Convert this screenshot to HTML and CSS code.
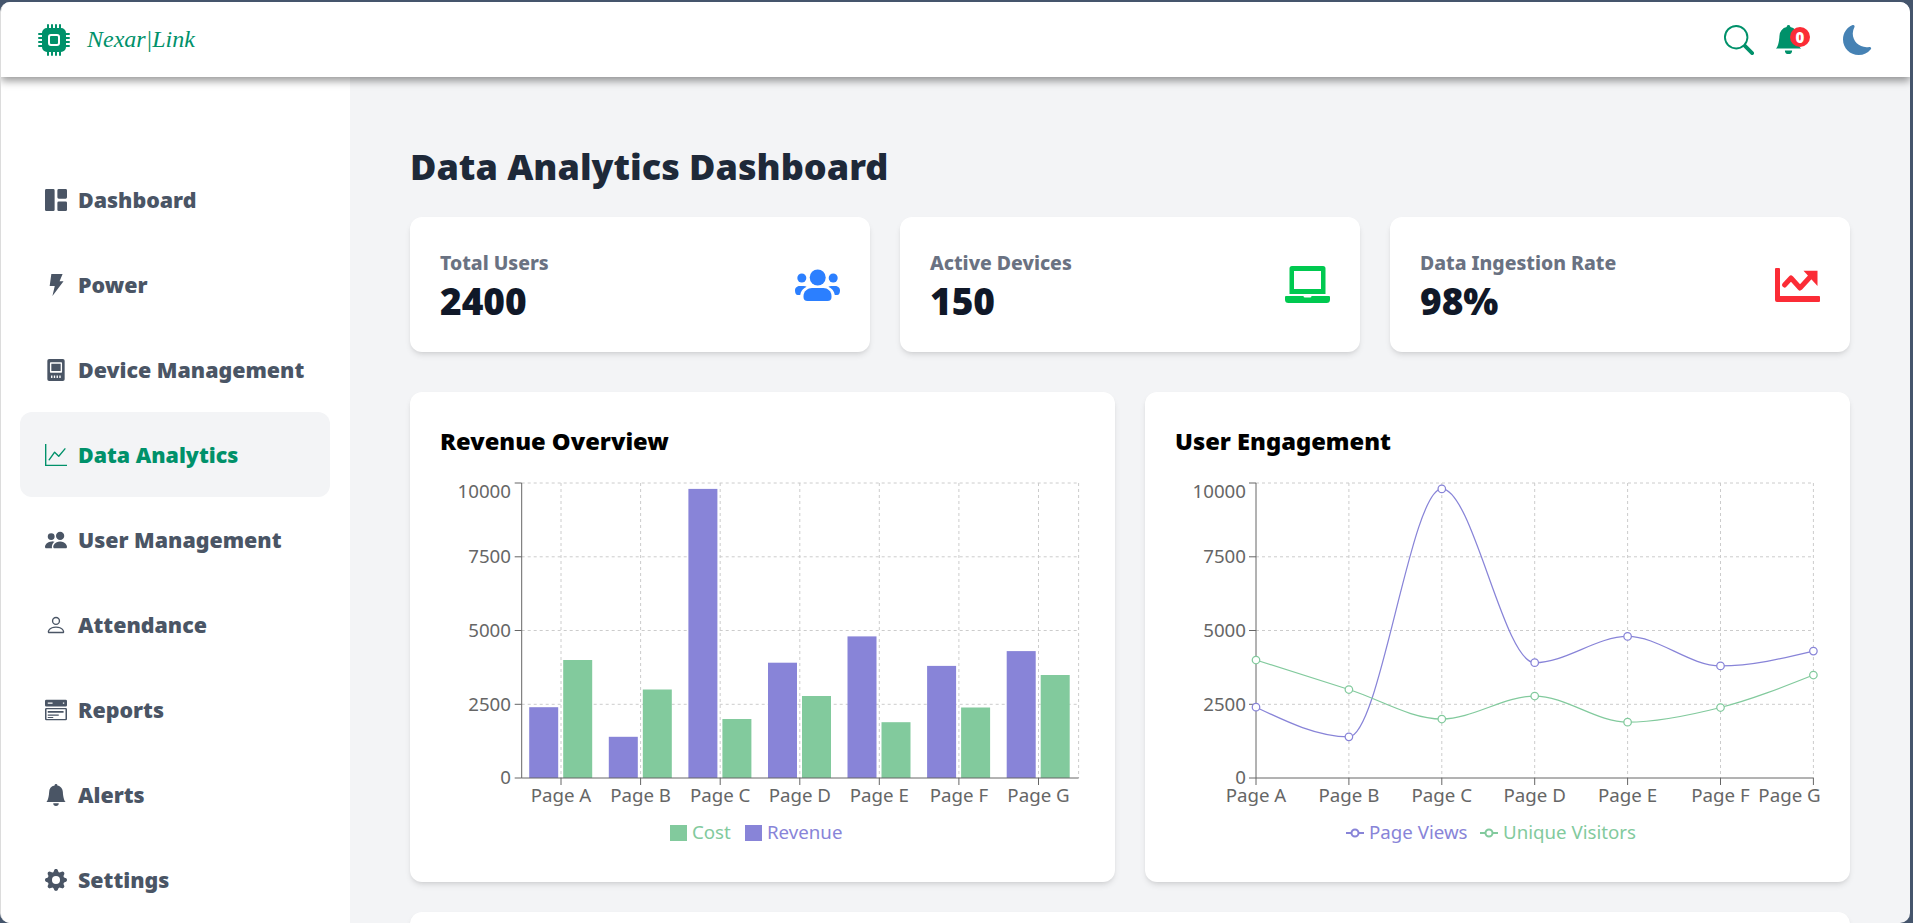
FILE: index.html
```html
<!DOCTYPE html>
<html lang="en">
<head>
    <meta charset="UTF-8">
    <meta name="viewport" content="width=device-width, initial-scale=1.0">
    <title>Nexar|Link - Data Analytics</title>
    <link rel="stylesheet" href="styles.css">
</head>
<body>
    <div class="window">
        <header class="topbar">
            <div class="brand">
                <svg class="brand-icon" viewBox="0 0 16 16" fill="currentColor">
                    <path d="M6.5 6a.5.5 0 0 0-.5.5v3a.5.5 0 0 0 .5.5h3a.5.5 0 0 0 .5-.5v-3a.5.5 0 0 0-.5-.5h-3z"/>
                    <path d="M5.5.5a.5.5 0 0 0-1 0V2A2.5 2.5 0 0 0 2 4.5H.5a.5.5 0 0 0 0 1H2v1H.5a.5.5 0 0 0 0 1H2v1H.5a.5.5 0 0 0 0 1H2v1H.5a.5.5 0 0 0 0 1H2A2.5 2.5 0 0 0 4.5 14v1.5a.5.5 0 0 0 1 0V14h1v1.5a.5.5 0 0 0 1 0V14h1v1.5a.5.5 0 0 0 1 0V14h1v1.5a.5.5 0 0 0 1 0V14a2.5 2.5 0 0 0 2.5-2.5h1.5a.5.5 0 0 0 0-1H14v-1h1.5a.5.5 0 0 0 0-1H14v-1h1.5a.5.5 0 0 0 0-1H14v-1h1.5a.5.5 0 0 0 0-1H14A2.5 2.5 0 0 0 11.5 2V.5a.5.5 0 0 0-1 0V2h-1V.5a.5.5 0 0 0-1 0V2h-1V.5a.5.5 0 0 0-1 0V2h-1V.5zm1 4.5h3A1.5 1.5 0 0 1 11 6.5v3A1.5 1.5 0 0 1 9.5 11h-3A1.5 1.5 0 0 1 5 9.5v-3A1.5 1.5 0 0 1 6.5 5z"/>
                </svg>
                <span class="brand-name">Nexar|Link</span>
            </div>
            <div class="topbar-actions">
                <svg class="action-search" viewBox="0 0 16 16" fill="currentColor">
                    <path d="M11.742 10.344a6.5 6.5 0 1 0-1.397 1.398h-.001c.03.04.062.078.098.115l3.85 3.85a1 1 0 0 0 1.415-1.414l-3.85-3.85a1.007 1.007 0 0 0-.115-.1zM12 6.5a5.5 5.5 0 1 1-11 0 5.5 5.5 0 0 1 11 0z"/>
                </svg>
                <div class="action-bell">
                    <svg viewBox="0 0 16 16" fill="currentColor">
                        <path d="M8 16a2 2 0 0 0 2-2H6a2 2 0 0 0 2 2zm.995-14.901a1 1 0 1 0-1.99 0A5.002 5.002 0 0 0 3 6c0 1.098-.5 6-2 7h14c-1.5-1-2-5.902-2-7 0-2.42-1.72-4.44-4.005-4.901z"/>
                    </svg>
                    <span class="badge">0</span>
                </div>
                <svg class="action-moon" viewBox="0 0 16 16" fill="currentColor">
                    <path d="M6 .278a.768.768 0 0 1 .08.858 7.208 7.208 0 0 0-.878 3.46c0 4.021 3.278 7.277 7.318 7.277.527 0 1.04-.055 1.533-.16a.787.787 0 0 1 .81.316.733.733 0 0 1-.031.893A8.349 8.349 0 0 1 8.344 16C3.734 16 0 12.286 0 7.71 0 4.266 2.114 1.312 5.124.06A.752.752 0 0 1 6 .278z"/>
                </svg>
            </div>
        </header>

        <div class="layout">
            <nav class="sidebar">
                <a class="nav-item">
                    <svg viewBox="0 0 16 16" fill="currentColor"><path d="M0 1a1 1 0 0 1 1-1h5a1 1 0 0 1 1 1v14a1 1 0 0 1-1 1H1a1 1 0 0 1-1-1V1zm9 0a1 1 0 0 1 1-1h5a1 1 0 0 1 1 1v5a1 1 0 0 1-1 1h-5a1 1 0 0 1-1-1V1zm0 9a1 1 0 0 1 1-1h5a1 1 0 0 1 1 1v5a1 1 0 0 1-1 1h-5a1 1 0 0 1-1-1v-5z"/></svg>
                    Dashboard
                </a>
                <a class="nav-item">
                    <svg viewBox="0 0 16 16" fill="currentColor"><path d="M4.6 0h8.2L10.6 5.2h2.9L5.4 16l1.7-7.2H3.4z"/></svg>
                    Power
                </a>
                <a class="nav-item">
                    <svg viewBox="0 0 16 16" fill="currentColor">
                        <path fill-rule="evenodd" d="M3 0h10a1.3 1.3 0 0 1 1.3 1.3v13.4A1.3 1.3 0 0 1 13 16H3a1.3 1.3 0 0 1-1.3-1.3V1.3A1.3 1.3 0 0 1 3 0zm1.2 2.4a.6.6 0 0 0-.6.6v6.4a.6.6 0 0 0 .6.6h7.6a.6.6 0 0 0 .6-.6V3a.6.6 0 0 0-.6-.6zm.4 1h6.8v5.4H4.6zM4.4 12v1.8h1V12zm2 0v1.8h1V12zm2 0v1.8h1V12zm2 0v1.8h1V12z"/>
                    </svg>
                    Device Management
                </a>
                <a class="nav-item active">
                    <svg viewBox="0 0 16 16" fill="currentColor"><path d="M0 0h1v15h15v1H0V0Zm14.817 3.113a.5.5 0 0 1 .07.704l-4.5 5.5a.5.5 0 0 1-.74.037L7.06 6.767l-3.656 5.027a.5.5 0 0 1-.808-.588l4-5.5a.5.5 0 0 1 .758-.06l2.609 2.61 4.15-5.073a.5.5 0 0 1 .704-.07Z"/></svg>
                    Data Analytics
                </a>
                <a class="nav-item">
                    <svg viewBox="0 0 16 16" fill="currentColor"><path d="M7 14s-1 0-1-1 1-4 5-4 5 3 5 4-1 1-1 1H7Zm4-6a3 3 0 1 0 0-6 3 3 0 0 0 0 6Zm-5.784 6A2.238 2.238 0 0 1 5 13c0-1.355.68-2.75 1.936-3.72A6.325 6.325 0 0 0 5 9c-4 0-5 3-5 4s1 1 1 1h4.216ZM4.5 8a2.5 2.5 0 1 0 0-5 2.5 2.5 0 0 0 0 5Z"/></svg>
                    User Management
                </a>
                <a class="nav-item">
                    <svg viewBox="0 0 16 16" fill="currentColor"><path d="M8 8a3 3 0 1 0 0-6 3 3 0 0 0 0 6Zm2-3a2 2 0 1 1-4 0 2 2 0 0 1 4 0Zm4 8c0 1-1 1-1 1H3s-1 0-1-1 1-4 6-4 6 3 6 4Zm-1-.004c-.001-.246-.154-.986-.832-1.664C11.516 10.68 10.289 10 8 10c-2.29 0-3.516.68-4.168 1.332-.678.678-.83 1.418-.832 1.664h10Z"/></svg>
                    Attendance
                </a>
                <a class="nav-item">
                    <svg viewBox="0 0 16 16" fill="currentColor">
                        <path fill-rule="evenodd" d="M1 .5h14a1 1 0 0 1 1 1v3a1 1 0 0 1-1 1H1a1 1 0 0 1-1-1v-3a1 1 0 0 1 1-1zm1 2v1h3.5v-1zm11 0v1h1v-1z"/>
                        <path fill-rule="evenodd" d="M1 6.5h14a1 1 0 0 1 1 1v7a1 1 0 0 1-1 1H1a1 1 0 0 1-1-1v-7a1 1 0 0 1 1-1zm.1 1v7h13.8v-7zM2 8.7h11.5V10H2zm0 2.5h8v.9H2zm0 1.8h4v.8H2z"/>
                    </svg>
                    Reports
                </a>
                <a class="nav-item">
                    <svg viewBox="0 0 16 16" fill="currentColor"><path d="M8 16a2 2 0 0 0 2-2H6a2 2 0 0 0 2 2zm.995-14.901a1 1 0 1 0-1.99 0A5.002 5.002 0 0 0 3 6c0 1.098-.5 6-2 7h14c-1.5-1-2-5.902-2-7 0-2.42-1.72-4.44-4.005-4.901z"/></svg>
                    Alerts
                </a>
                <a class="nav-item">
                    <svg viewBox="0 0 16 16" fill="currentColor"><path d="M9.405 1.05c-.413-1.4-2.397-1.4-2.81 0l-.1.34a1.464 1.464 0 0 1-2.105.872l-.31-.17c-1.283-.698-2.686.705-1.987 1.987l.169.311c.446.82.023 1.841-.872 2.105l-.34.1c-1.4.413-1.4 2.397 0 2.81l.34.1a1.464 1.464 0 0 1 .872 2.105l-.17.31c-.698 1.283.705 2.686 1.987 1.987l.311-.169a1.464 1.464 0 0 1 2.105.872l.1.34c.413 1.4 2.397 1.4 2.81 0l.1-.34a1.464 1.464 0 0 1 2.105-.872l.31.17c1.283.698 2.686-.705 1.987-1.987l-.169-.311a1.464 1.464 0 0 1 .872-2.105l.34-.1c1.4-.413 1.4-2.397 0-2.81l-.34-.1a1.464 1.464 0 0 1-.872-2.105l.17-.31c.698-1.283-.705-2.686-1.987-1.987l-.311.169a1.464 1.464 0 0 1-2.105-.872l-.1-.34zM8 10.93a2.929 2.929 0 1 1 0-5.86 2.929 2.929 0 0 1 0 5.858z"/></svg>
                    Settings
                </a>
            </nav>

            <main class="content">
                <h1 class="page-title">Data Analytics Dashboard</h1>

                <section class="stats">
                    <div class="card stat-card">
                        <div>
                            <div class="stat-label">Total Users</div>
                            <div class="stat-value">2400</div>
                        </div>
                        <svg class="stat-icon icon-blue" viewBox="0 0 45 32" fill="currentColor">
                            <circle cx="22.7" cy="8.5" r="8"/>
                            <circle cx="6.8" cy="9" r="4.5"/>
                            <circle cx="38.2" cy="9" r="4.5"/>
                            <path d="M8.5 27C8.5 22 13 19 17 19h11.4c4 0 8.1 3 8.1 8v1a4 4 0 0 1-4 4h-20a4 4 0 0 1-4-4z"/>
                            <path d="M0 21.5c0-2.8 2.3-4.5 4.8-4.5h4c1 0 2 .2 2.8.7-3.6 1.7-5.8 4.3-6.4 8.3H2.8C1 26 0 24 0 21.5z"/>
                            <path d="M45 21.5c0-2.8-2.3-4.5-4.8-4.5h-4c-1 0-2 .2-2.8.7 3.6 1.7 5.8 4.3 6.4 8.3h2.4c1.8 0 2.8-2 2.8-4.5z"/>
                        </svg>
                    </div>
                    <div class="card stat-card">
                        <div>
                            <div class="stat-label">Active Devices</div>
                            <div class="stat-value">150</div>
                        </div>
                        <svg class="stat-icon icon-green" viewBox="0 0 45 37" fill="currentColor">
                            <path fill-rule="evenodd" d="M7 0h31a2.5 2.5 0 0 1 2.5 2.5V28h-36V2.5A2.5 2.5 0 0 1 7 0zm2 5v18h27V5z"/>
                            <path d="M1 30h17.5a1.5 1.5 0 0 0 1.5 1.5h5a1.5 1.5 0 0 0 1.5-1.5H44a1 1 0 0 1 1 1v2.5a3.5 3.5 0 0 1-3.5 3.5h-38A3.5 3.5 0 0 1 0 33.5V31a1 1 0 0 1 1-1z"/>
                        </svg>
                    </div>
                    <div class="card stat-card">
                        <div>
                            <div class="stat-label">Data Ingestion Rate</div>
                            <div class="stat-value">98%</div>
                        </div>
                        <svg class="stat-icon icon-red" viewBox="0 0 45 34" fill="currentColor">
                            <path d="M1 0h3a1 1 0 0 1 1 1v27h39a1 1 0 0 1 1 1v4a1 1 0 0 1-1 1H2a2 2 0 0 1-2-2V1a1 1 0 0 1 1-1z"/>
                            <path d="M28.5 2.7h14V18z"/>
                            <polyline class="trend-line" points="9.5,17 16,10 25,20 36,8"/>
                        </svg>
                    </div>
                </section>

                <section class="charts">
                    <div class="card chart-card">
                        <h2 class="chart-title">Revenue Overview</h2>
                        <svg class="chart" viewBox="440 478 645 374">
                            <g class="grid">
                                <path d="M521.7 483H1078.6M521.7 556.8H1078.6M521.7 630.5H1078.6M521.7 704.3H1078.6"/>
                                <path d="M561 483V778M640.6 483V778M720.2 483V778M799.8 483V778M879.3 483V778M958.9 483V778M1038.5 483V778M1078.6 483V778"/>
                            </g>
                            <g class="bars-revenue">
                                <rect x="529.2" y="707.2" width="29" height="70.8"/>
                                <rect x="608.8" y="736.8" width="29" height="41.2"/>
                                <rect x="688.4" y="488.9" width="29" height="289.1"/>
                                <rect x="768" y="662.7" width="29" height="115.3"/>
                                <rect x="847.5" y="636.4" width="29" height="141.6"/>
                                <rect x="927.1" y="665.9" width="29" height="112.1"/>
                                <rect x="1006.7" y="651.1" width="29" height="126.9"/>
                            </g>
                            <g class="bars-cost">
                                <rect x="563.2" y="660" width="29" height="118"/>
                                <rect x="642.8" y="689.5" width="29" height="88.5"/>
                                <rect x="722.4" y="719" width="29" height="59"/>
                                <rect x="802" y="696" width="29" height="82"/>
                                <rect x="881.5" y="722.2" width="29" height="55.8"/>
                                <rect x="961.1" y="707.5" width="29" height="70.5"/>
                                <rect x="1040.7" y="675" width="29" height="103"/>
                            </g>
                            <g class="axis">
                                <path d="M521.7 483V778H1078.6"/>
                                <path d="M514.7 483h7M514.7 556.8h7M514.7 630.5h7M514.7 704.3h7M514.7 778h7"/>
                                <path d="M561 778v7M640.6 778v7M720.2 778v7M799.8 778v7M879.3 778v7M958.9 778v7M1038.5 778v7"/>
                            </g>
                            <g class="tick-y">
                                <text x="511" y="498">10000</text>
                                <text x="511" y="563">7500</text>
                                <text x="511" y="637">5000</text>
                                <text x="511" y="711">2500</text>
                                <text x="511" y="784">0</text>
                            </g>
                            <g class="tick-x">
                                <text x="561" y="802">Page A</text>
                                <text x="640.6" y="802">Page B</text>
                                <text x="720.2" y="802">Page C</text>
                                <text x="799.8" y="802">Page D</text>
                                <text x="879.3" y="802">Page E</text>
                                <text x="958.9" y="802">Page F</text>
                                <text x="1038.5" y="802">Page G</text>
                            </g>
                            <rect class="swatch-cost" x="670" y="825" width="17" height="16"/>
                            <text class="legend-cost" x="692" y="839">Cost</text>
                            <rect class="swatch-revenue" x="745" y="825" width="17" height="16"/>
                            <text class="legend-revenue" x="767" y="839">Revenue</text>
                        </svg>
                    </div>

                    <div class="card chart-card">
                        <h2 class="chart-title">User Engagement</h2>
                        <svg class="chart" viewBox="1175 478 645 374">
                            <g class="grid">
                                <path d="M1256 483H1813.4M1256 556.8H1813.4M1256 630.5H1813.4M1256 704.3H1813.4"/>
                                <path d="M1348.9 483V778M1441.8 483V778M1534.7 483V778M1627.6 483V778M1720.5 483V778M1813.4 483V778"/>
                            </g>
                            <g class="axis">
                                <path d="M1256 483V778H1813.4"/>
                                <path d="M1249 483h7M1249 556.8h7M1249 630.5h7M1249 704.3h7M1249 778h7"/>
                                <path d="M1256 778v7M1348.9 778v7M1441.8 778v7M1534.7 778v7M1627.6 778v7M1720.5 778v7M1813.4 778v7"/>
                            </g>
                            <g class="tick-y">
                                <text x="1246" y="498">10000</text>
                                <text x="1246" y="563">7500</text>
                                <text x="1246" y="637">5000</text>
                                <text x="1246" y="711">2500</text>
                                <text x="1246" y="784">0</text>
                            </g>
                            <g class="tick-x">
                                <text x="1256" y="802">Page A</text>
                                <text x="1348.9" y="802">Page B</text>
                                <text x="1441.8" y="802">Page C</text>
                                <text x="1534.7" y="802">Page D</text>
                                <text x="1627.6" y="802">Page E</text>
                                <text x="1720.5" y="802">Page F</text>
                                <text x="1789.5" y="802">Page G</text>
                            </g>
                            <path class="line-views" d="M1256 707.2C1286.97 722 1317.93 736.8 1348.9 736.8C1379.87 736.8 1410.83 488.9 1441.8 488.9C1472.77 488.9 1503.73 662.7 1534.7 662.7C1565.67 662.7 1596.63 636.4 1627.6 636.4C1658.57 636.4 1689.53 665.9 1720.5 665.9C1751.47 665.9 1782.43 658.5 1813.4 651.1"/>
                            <path class="line-visitors" d="M1256 660L1348.9 689.5C1379.87 699.33 1410.83 719 1441.8 719C1472.77 719 1503.73 696 1534.7 696C1565.67 696 1596.63 722.2 1627.6 722.2C1658.57 722.2 1689.53 715.37 1720.5 707.5C1751.47 699.63 1782.43 687.32 1813.4 675"/>
                            <g class="dots-views">
                                <circle cx="1256" cy="707.2" r="3.75"/>
                                <circle cx="1348.9" cy="736.8" r="3.75"/>
                                <circle cx="1441.8" cy="488.9" r="3.75"/>
                                <circle cx="1534.7" cy="662.7" r="3.75"/>
                                <circle cx="1627.6" cy="636.4" r="3.75"/>
                                <circle cx="1720.5" cy="665.9" r="3.75"/>
                                <circle cx="1813.4" cy="651.1" r="3.75"/>
                            </g>
                            <g class="dots-visitors">
                                <circle cx="1256" cy="660" r="3.75"/>
                                <circle cx="1348.9" cy="689.5" r="3.75"/>
                                <circle cx="1441.8" cy="719" r="3.75"/>
                                <circle cx="1534.7" cy="696" r="3.75"/>
                                <circle cx="1627.6" cy="722.2" r="3.75"/>
                                <circle cx="1720.5" cy="707.5" r="3.75"/>
                                <circle cx="1813.4" cy="675" r="3.75"/>
                            </g>
                            <g class="dots-views legend-key">
                                <path d="M1346 833h18"/>
                                <circle cx="1355" cy="833" r="3.5"/>
                            </g>
                            <text class="legend-revenue" x="1369" y="839">Page Views</text>
                            <g class="dots-visitors legend-key">
                                <path d="M1480 833h18"/>
                                <circle cx="1489" cy="833" r="3.5"/>
                            </g>
                            <text class="legend-cost" x="1503" y="839">Unique Visitors</text>
                        </svg>
                    </div>
                </section>

                <div class="card extra-card"></div>
            </main>
        </div>
    </div>
</body>
</html>
```

FILE: styles.css
```css
* {
    box-sizing: border-box;
}
html, body {
    height: 100%;
}
body {
    margin: 0;
    overflow: hidden;
    background: #45556c;
    font-family: "Noto Sans", "Open Sans", sans-serif;
}
.window {
    height: calc(100vh - 2px);
    margin: 2px 3px 0 0;
    border-left: 1px solid #dcdcdc;
    border-radius: 10px;
    overflow: hidden;
    background: #f3f4f6;
    display: flex;
    flex-direction: column;
}
.topbar {
    position: relative;
    z-index: 2;
    flex: none;
    height: 75px;
    padding: 0 37px;
    background: #fff;
    display: flex;
    justify-content: space-between;
    align-items: center;
    box-shadow: 0 4px 8px rgba(0, 0, 0, 0.4);
}
.brand {
    display: flex;
    align-items: center;
    gap: 17px;
    color: #00916a;
}
.brand-icon {
    width: 32px;
    height: 32px;
}
.brand-name {
    font-family: "Liberation Serif", serif;
    font-style: italic;
    font-size: 24px;
}
.topbar-actions {
    display: flex;
    align-items: center;
    gap: 20px;
    color: #00916a;
}
.action-search {
    width: 30px;
    height: 30px;
}
.action-bell {
    position: relative;
    width: 29px;
    height: 29px;
}
.action-bell svg {
    display: block;
    width: 29px;
    height: 29px;
}
.badge {
    position: absolute;
    top: 2px;
    right: -7px;
    width: 20px;
    height: 20px;
    border-radius: 50%;
    background: #fb2c36;
    color: #fff;
    font-size: 15px;
    font-weight: 900;
    line-height: 20px;
    text-align: center;
}
.action-moon {
    width: 30px;
    height: 30px;
    margin-left: 20px;
    color: #4682b4;
}
.layout {
    flex: 1;
    min-height: 0;
    display: flex;
}
.sidebar {
    flex: none;
    width: 349px;
    padding: 80px 20px 0 19px;
    background: #fff;
}
.nav-item {
    height: 85px;
    padding-left: 25px;
    border-radius: 12px;
    display: flex;
    align-items: center;
    gap: 11px;
    color: #4a5565;
    font-size: 21.4px;
    font-weight: 900;
}
.nav-item svg {
    flex: none;
    width: 22px;
    height: 22px;
}
.nav-item.active {
    background: #f3f4f6;
    color: #00916a;
}
.content {
    flex: 1;
    min-width: 0;
    padding: 70px 60px 0;
}
.page-title {
    margin: 0 0 30px;
    color: #1e2939;
    font-size: 36px;
    font-weight: 900;
    line-height: 40px;
}
.card {
    background: #fff;
    border-radius: 12px;
    box-shadow: 0 4px 6px -1px rgba(0, 0, 0, 0.1), 0 2px 4px -2px rgba(0, 0, 0, 0.1);
}
.stats {
    display: grid;
    grid-template-columns: repeat(3, 1fr);
    gap: 30px;
    margin-bottom: 40px;
}
.stat-card {
    height: 135px;
    padding: 0 30px;
    display: flex;
    justify-content: space-between;
    align-items: center;
}
.stat-label {
    color: #6a7282;
    font-size: 19.4px;
    font-weight: 800;
    line-height: 34px;
}
.stat-value {
    margin-top: -2px;
    color: #101828;
    font-size: 37px;
    font-weight: 900;
    line-height: 46px;
}
.stat-icon {
    width: 45px;
}
.icon-blue {
    color: #2b7fff;
}
.icon-green {
    color: #00c950;
}
.icon-red {
    color: #fb2c36;
}
.trend-line {
    fill: none;
    stroke: currentColor;
    stroke-width: 5;
    stroke-linecap: round;
    stroke-linejoin: round;
}
.charts {
    display: grid;
    grid-template-columns: repeat(2, 1fr);
    gap: 30px;
    margin-bottom: 30px;
}
.chart-card {
    height: 490px;
    padding: 29px 30px 30px;
}
.chart-title {
    margin: 0 0 17px;
    color: #000;
    font-size: 23.7px;
    font-weight: 900;
    line-height: 40px;
}
.chart {
    display: block;
    width: 645px;
    height: 374px;
    font-size: 18.7px;
}
.grid path {
    fill: none;
    stroke: #ccc;
    stroke-dasharray: 3 3;
}
.axis path {
    fill: none;
    stroke: #666;
}
.tick-y text {
    fill: #666;
    text-anchor: end;
}
.tick-x text {
    fill: #666;
    text-anchor: middle;
}
.bars-revenue rect,
.swatch-revenue {
    fill: #8884d8;
}
.bars-cost rect,
.swatch-cost {
    fill: #82ca9d;
}
.legend-revenue {
    fill: #8884d8;
}
.legend-cost {
    fill: #82ca9d;
}
.line-views,
.line-visitors {
    fill: none;
    stroke-width: 1.25;
}
.line-views {
    stroke: #8884d8;
}
.line-visitors {
    stroke: #82ca9d;
}
.dots-views circle,
.dots-views path {
    fill: #fff;
    stroke: #8884d8;
    stroke-width: 1.25;
}
.dots-visitors circle,
.dots-visitors path {
    fill: #fff;
    stroke: #82ca9d;
    stroke-width: 1.25;
}
.legend-key path,
.legend-key circle {
    stroke-width: 2;
}
.extra-card {
    height: 300px;
}
```
